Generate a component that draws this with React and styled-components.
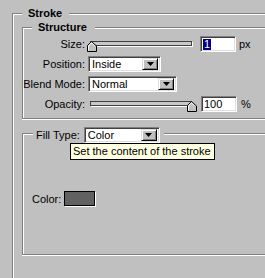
import React from "react";
import styled, { createGlobalStyle } from "styled-components";

const GlobalStyle = createGlobalStyle`
	html, body {
		margin: 0;
		padding: 0;
		background: #c0c0c0;
		overflow: hidden;
	}
	body {
		font-family: "Liberation Sans", Arial, sans-serif;
		font-size: 11px;
		color: #000;
	}
`;

const Page = styled.div`
	width: 265px;
	height: 278px;
	padding: 13px 0 0 12px;
	box-sizing: border-box;
	overflow: hidden;
`;

// etched frame, open on the right where the dialog runs past the view
const Group = styled.div`
	position: relative;
	box-sizing: border-box;
	border-style: solid;
	border-color: #808080;
	border-width: 1px 0 1px 1px;
	box-shadow: inset 1px 1px 0 #fff, 0 1px 0 #fff;
`;

const OuterGroup = styled(Group)`
	height: 265px;
	border-bottom-width: 0;
	box-shadow: inset 1px 1px 0 #fff;
	padding: 13px 0 0 9px;
`;

const StructureGroup = styled(Group)`
	height: 92px;
	padding-top: 8px;
`;

const FillGroup = styled(Group)`
	height: 122px;
	margin-top: 14px;
	padding: 57px 0 0 9px;
`;

const Legend = styled.div`
	position: absolute;
	top: -8px;
	left: 9px;
	padding: 0 ${(p) => p.$right}px 0 6px;
	background: #c0c0c0;
	font-weight: bold;
	font-size: 11px;
	line-height: 14px;
`;

const FillLegend = styled.div`
	position: absolute;
	top: -7px;
	left: 10px;
	display: flex;
	align-items: center;
	gap: 4px;
	padding: 0 4px 0 3px;
	background: #c0c0c0;
`;

const Fields = styled.div`
	display: grid;
	grid-template-columns: 62px auto;
	grid-auto-rows: 16px;
	column-gap: 3px;
	row-gap: 4px;
	align-items: center;
`;

const Label = styled.span`
	text-align: right;
	white-space: nowrap;
`;

const Control = styled.div`
	display: flex;
	align-items: center;
	gap: 3px;
`;

const SliderWrap = styled.div`
	position: relative;
	width: 110px;
	height: 16px;
	margin-left: -1px;
`;

const Track = styled.div`
	box-sizing: border-box;
	margin: 5px 0 0 3px;
	width: 102px;
	height: 5px;
	background: #c8c8c8;
	border: 1px solid #404040;
	box-shadow: 1px 1px 0 #fff;
`;

const Thumb = styled.svg`
	position: absolute;
	top: 5px;
	display: block;
`;

const Sunken = styled.div`
	box-sizing: border-box;
	height: 16px;
	background: #fff;
	border: 1px solid;
	border-color: #808080 #fff #fff #808080;
	box-shadow: inset 1px 1px 0 #404040, inset -1px -1px 0 #dfdfdf;
	display: flex;
	align-items: center;
	white-space: nowrap;
`;

const TextBox = styled(Sunken)`
	width: 36px;
	padding-left: 2px;
	margin-left: ${(p) => p.$shift || 0}px;
`;

const Selected = styled.span`
	background: #000080;
	color: #fff;
	line-height: 11px;
	padding: 0 1px;
`;

const SelectBox = styled(Sunken)`
	width: ${(p) => p.$width}px;
	padding: 0 2px 0 3px;
`;

const ArrowButton = styled.div`
	box-sizing: border-box;
	margin-left: auto;
	width: 16px;
	height: 12px;
	background: #c0c0c0;
	border: 1px solid;
	border-color: #dfdfdf #000 #000 #dfdfdf;
	box-shadow: inset 1px 1px 0 #fff, inset -1px -1px 0 #808080;
	display: flex;
	align-items: center;
	justify-content: center;
`;

const Unit = styled.span`
	margin-left: ${(p) => p.$shift || 0}px;
`;

const ColorRow = styled.div`
	display: flex;
	align-items: center;
	gap: 3px;
`;

const Swatch = styled.div`
	box-sizing: border-box;
	width: 31px;
	height: 15px;
	background: #616161;
	border: 1px solid #000;
	box-shadow: 1px 1px 0 #fff;
`;

const Tooltip = styled.div`
	position: absolute;
	left: 47px;
	top: 9px;
	box-sizing: border-box;
	width: 145px;
	height: 17px;
	padding: 0 2px;
	border: 1px solid #000;
	background: #ffffe1;
	line-height: 15px;
	white-space: nowrap;
`;

const DownArrow = () => (
	<svg width="7" height="4" viewBox="0 0 7 4">
		<polygon points="0,0 7,0 3.5,4" fill="#000" />
	</svg>
);

const Select = ({ value, width }) => (
	<SelectBox $width={width}>
		{value}
		<ArrowButton>
			<DownArrow />
		</ArrowButton>
	</SelectBox>
);

const Slider = ({ value, max }) => (
	<SliderWrap>
		<Track />
		<Thumb
			width="10"
			height="11"
			viewBox="0 0 10 11"
			style={{ left: Math.round((value / max) * 100) }}
		>
			<polygon points="4.5,0.5 9.5,5 9.5,10.5 0.5,10.5 0.5,4.5" fill="#c0c0c0" stroke="#000" />
			<polyline points="1.5,9.5 1.5,5 4.5,1.8 7.5,4.8" fill="none" stroke="#fff" />
		</Thumb>
	</SliderWrap>
);

const App = () => (
	<>
		<GlobalStyle />
		<Page>
			<OuterGroup>
				<Legend $right={7}>Stroke</Legend>
				<StructureGroup>
					<Legend $right={8}>Structure</Legend>
					<Fields>
						<Label>Size:</Label>
						<Control>
							<Slider value={1} max={250} />
							<TextBox>
								<Selected>1</Selected>
							</TextBox>
							<span>px</span>
						</Control>
						<Label>Position:</Label>
						<Control>
							<Select value="Inside" width={73} />
						</Control>
						<Label>Blend Mode:</Label>
						<Control>
							<Select value="Normal" width={89} />
						</Control>
						<Label>Opacity:</Label>
						<Control>
							<Slider value={100} max={100} />
							<TextBox $shift={1}>100</TextBox>
							<Unit $shift={1}>%</Unit>
						</Control>
					</Fields>
				</StructureGroup>
				<FillGroup>
					<FillLegend>
						<span>Fill Type:</span>
						<Select value="Color" width={76} />
					</FillLegend>
					<ColorRow>
						<span>Color:</span>
						<Swatch />
					</ColorRow>
					<Tooltip>Set the content of the stroke</Tooltip>
				</FillGroup>
			</OuterGroup>
		</Page>
	</>
);

export default App;
